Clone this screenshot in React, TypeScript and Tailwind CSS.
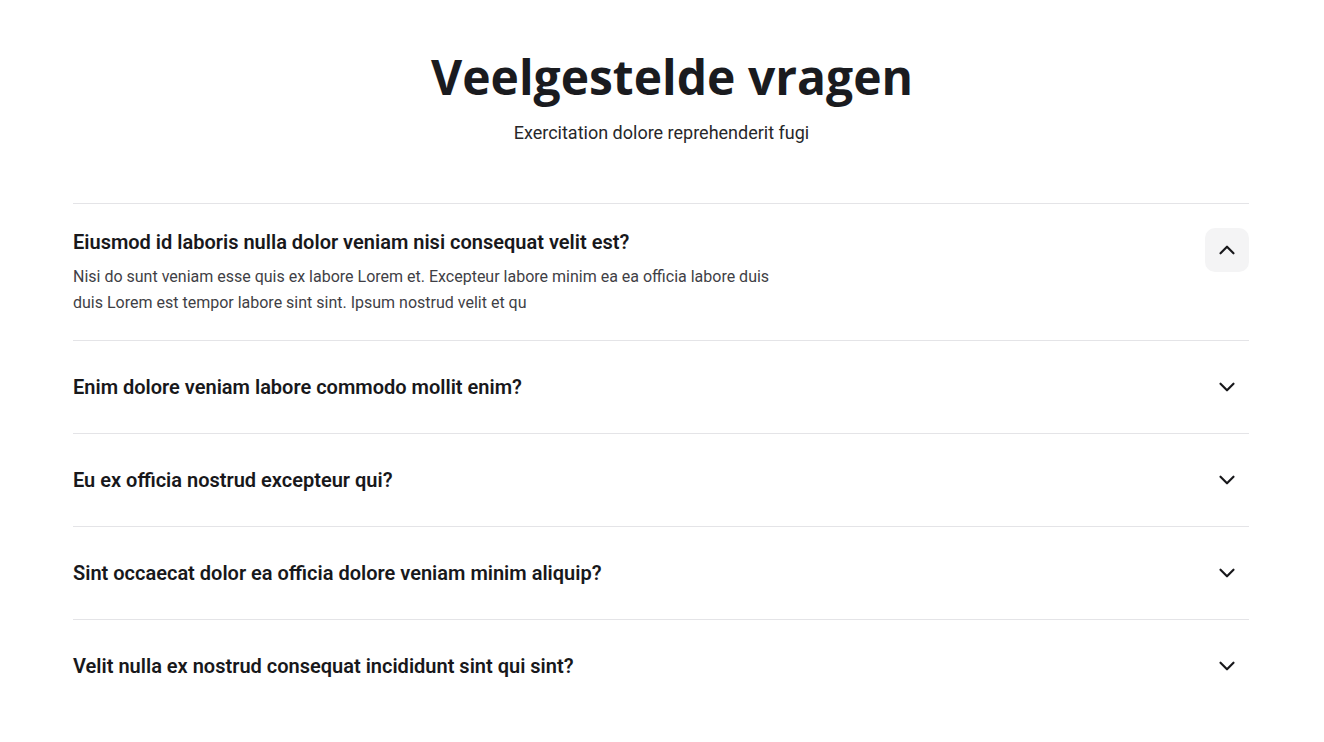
import React, { useState } from 'react';

const faqs = [
  {
    q: 'Eiusmod id laboris nulla dolor veniam nisi consequat velit est?',
    a: 'Nisi do sunt veniam esse quis ex labore Lorem et. Excepteur labore minim ea ea officia labore duis duis Lorem est tempor labore sint sint. Ipsum nostrud velit et qu',
  },
  { q: 'Enim dolore veniam labore commodo mollit enim?', a: 'Aliqua amet consequat nulla ad ipsum.' },
  { q: 'Eu ex officia nostrud excepteur qui?', a: 'Aliqua amet consequat nulla ad ipsum.' },
  { q: 'Sint occaecat dolor ea officia dolore veniam minim aliquip?', a: 'Aliqua amet consequat nulla ad ipsum.' },
  { q: 'Velit nulla ex nostrud consequat incididunt sint qui sint?', a: 'Aliqua amet consequat nulla ad ipsum.' },
];

const Chevron: React.FC<{ up?: boolean }> = ({ up }) => (
  <svg width="26" height="26" viewBox="0 0 24 24" fill="none" stroke="currentColor" strokeWidth="2" strokeLinecap="round" strokeLinejoin="round">
    {up ? <path d="M6 15l6-6 6 6" /> : <path d="M6 9l6 6 6-6" />}
  </svg>
);

const App: React.FC = () => {
  const [open, setOpen] = useState(0);

  return (
    <div className="min-h-screen bg-white font-['Roboto',sans-serif] text-[#18181b]">
      <div className="ml-[73px] w-[1176px] pt-12">
        <h2 className="pl-[22px] text-center font-['Open_Sans',sans-serif] text-[48px] font-bold leading-[58px] text-[#1a1b1f]">
          Veelgestelde vragen
        </h2>
        <p className="mt-[15px] pl-px text-center text-[18px] leading-6 text-[#27272a]">
          Exercitation dolore reprehenderit fugi
        </p>

        <div className="mt-[58px]">
          {faqs.map((item, i) => {
            const isOpen = open === i;
            return (
              <div key={item.q} className="border-t border-[#e4e4e7] py-6">
                <div className="flex items-start justify-between gap-6">
                  <div className="flex min-h-11 flex-col justify-center">
                    <h3 className="text-[20px] font-semibold leading-7 text-[#18181b]">{item.q}</h3>
                    {isOpen && (
                      <p className="mt-2 max-w-[720px] text-base leading-[26px] text-[#3f3f46]">{item.a}</p>
                    )}
                  </div>
                  <button
                    onClick={() => setOpen(isOpen ? -1 : i)}
                    className={`flex h-11 w-11 shrink-0 items-center justify-center rounded-[10px] text-[#18181b] ${isOpen ? 'bg-[#f4f4f5]' : 'bg-transparent'}`}
                    aria-expanded={isOpen}
                  >
                    <Chevron up={isOpen} />
                  </button>
                </div>
              </div>
            );
          })}
        </div>
      </div>
    </div>
  );
};

export default App;
